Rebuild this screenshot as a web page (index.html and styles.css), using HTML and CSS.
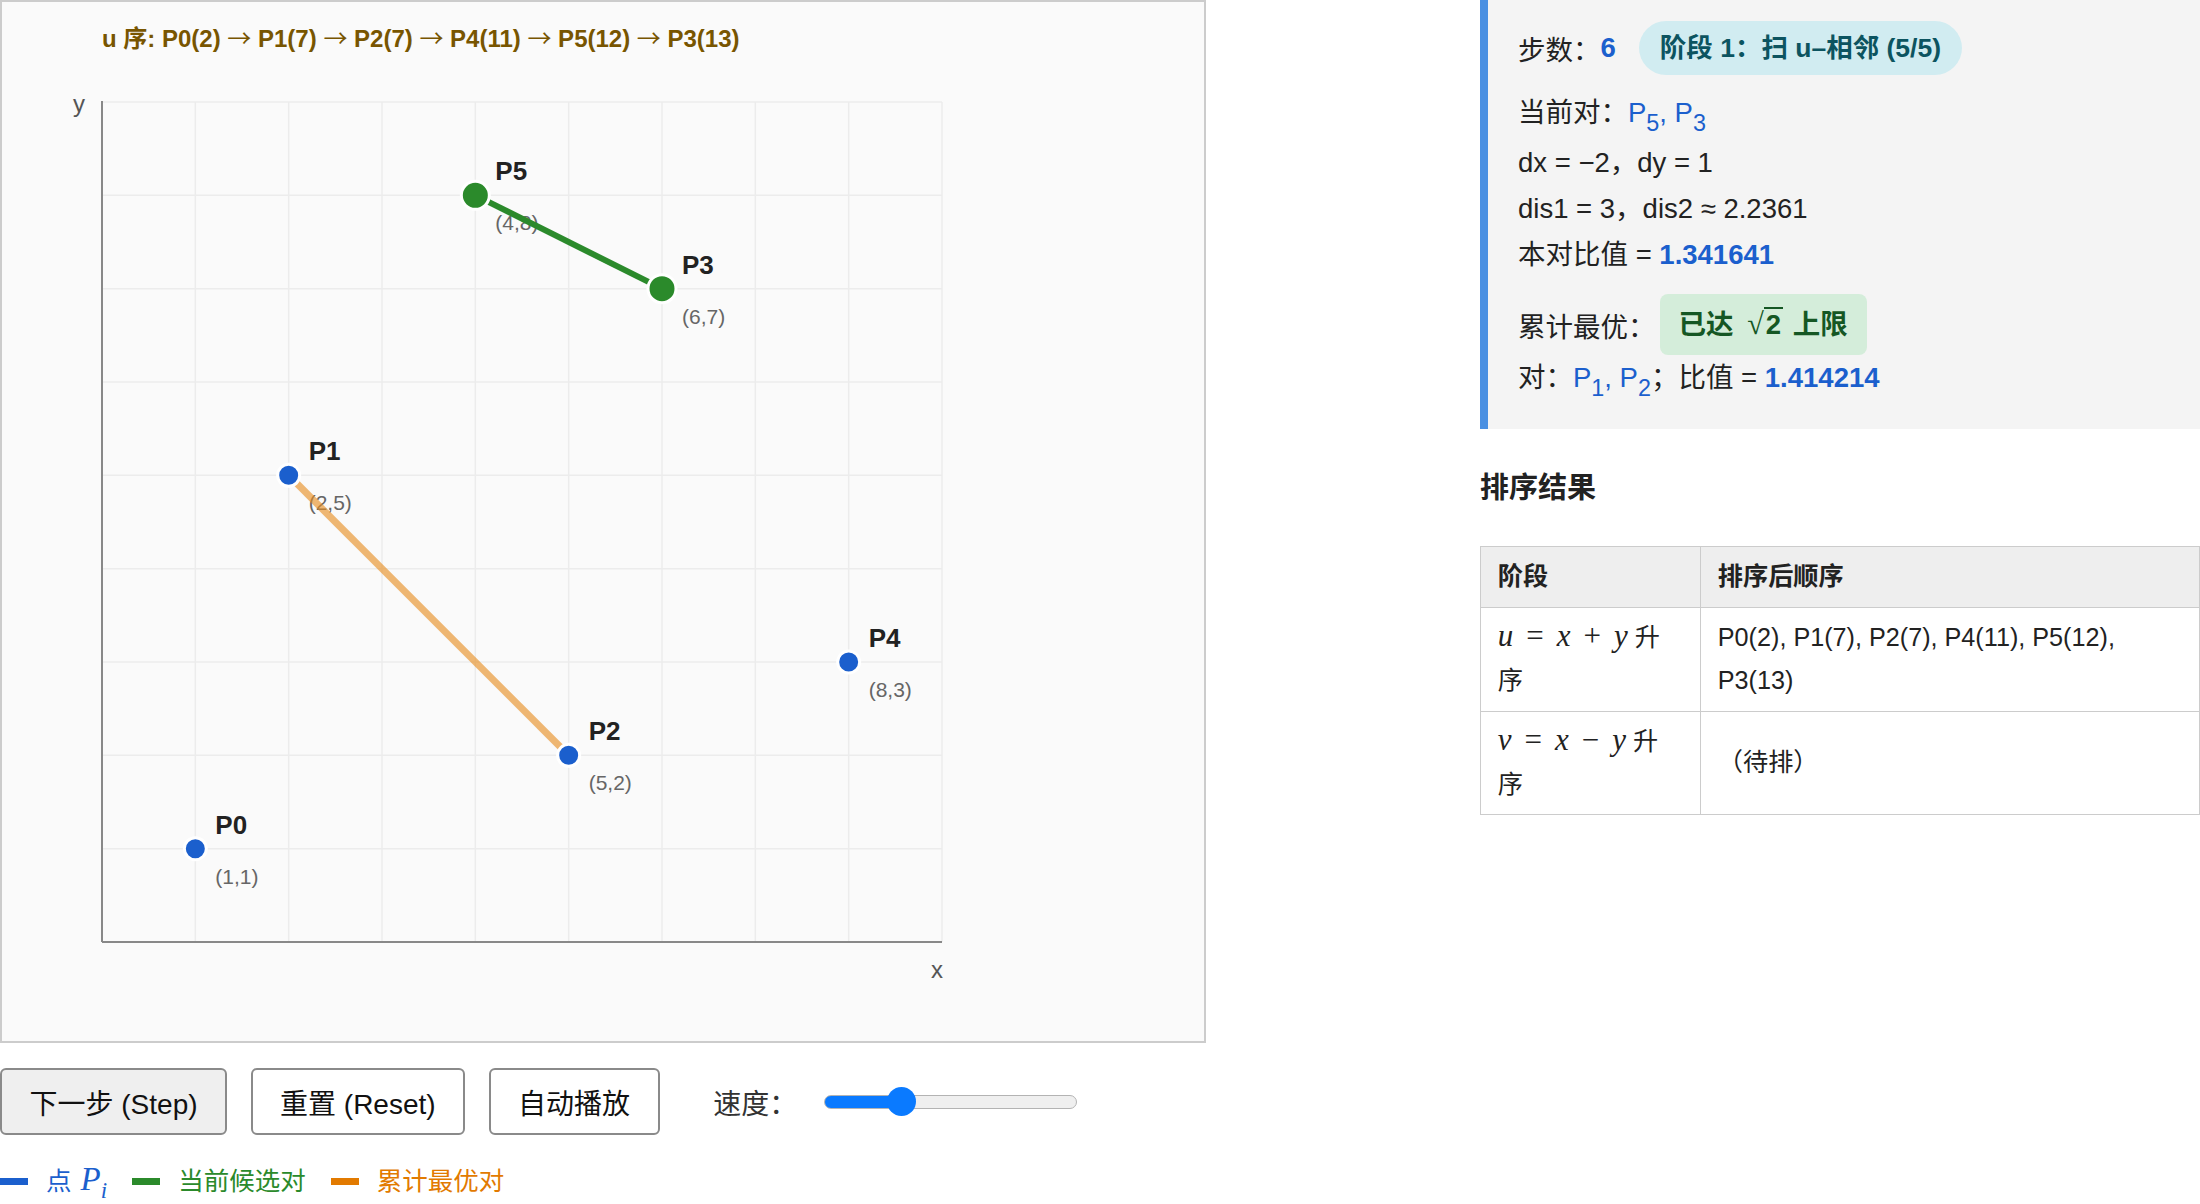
FILE: index.html
```html
<!DOCTYPE html>
<html lang="zh-CN">
<head>
  <meta charset="UTF-8" />
  <meta name="viewport" content="width=device-width, initial-scale=1.0"/>
  <title>√2 比值扫描</title>
  <link rel="stylesheet" href="styles.css">
</head>
<body>
  <div class="page">
    <section class="left">
      <div class="board">
        <svg width="1202" height="1039" viewBox="0 0 1202 1039">
          <text class="title" x="100" y="44.5">u 序: P0(2) <tspan class="arr">→</tspan> P1(7) <tspan class="arr">→</tspan> P2(7) <tspan class="arr">→</tspan> P4(11) <tspan class="arr">→</tspan> P5(12) <tspan class="arr">→</tspan> P3(13)</text>

          <g class="grid">
            <line x1="193.33" y1="100" x2="193.33" y2="940"/>
            <line x1="286.67" y1="100" x2="286.67" y2="940"/>
            <line x1="380" y1="100" x2="380" y2="940"/>
            <line x1="473.33" y1="100" x2="473.33" y2="940"/>
            <line x1="566.67" y1="100" x2="566.67" y2="940"/>
            <line x1="660" y1="100" x2="660" y2="940"/>
            <line x1="753.33" y1="100" x2="753.33" y2="940"/>
            <line x1="846.67" y1="100" x2="846.67" y2="940"/>
            <line x1="940" y1="100" x2="940" y2="940"/>
            <line x1="100" y1="100" x2="940" y2="100"/>
            <line x1="100" y1="193.33" x2="940" y2="193.33"/>
            <line x1="100" y1="286.67" x2="940" y2="286.67"/>
            <line x1="100" y1="380" x2="940" y2="380"/>
            <line x1="100" y1="473.33" x2="940" y2="473.33"/>
            <line x1="100" y1="566.67" x2="940" y2="566.67"/>
            <line x1="100" y1="660" x2="940" y2="660"/>
            <line x1="100" y1="753.33" x2="940" y2="753.33"/>
            <line x1="100" y1="846.67" x2="940" y2="846.67"/>
          </g>

          <g class="axes">
            <line x1="100" y1="99" x2="100" y2="940"/>
            <line x1="100" y1="940" x2="940" y2="940"/>
          </g>
          <text class="axis-label" x="71" y="110">y</text>
          <text class="axis-label" x="929" y="976">x</text>

          <!-- labels -->
          <text class="pt-name" x="213.3" y="831.7">P0</text>
          <text class="pt-coord" x="213.3" y="881.5">(1,1)</text>
          <text class="pt-name" x="306.7" y="458.3">P1</text>
          <text class="pt-coord" x="306.7" y="508">(2,5)</text>
          <text class="pt-name" x="586.7" y="738.3">P2</text>
          <text class="pt-coord" x="586.7" y="788">(5,2)</text>
          <text class="pt-name" x="680" y="271.7">P3</text>
          <text class="pt-coord" x="680" y="321.5">(6,7)</text>
          <text class="pt-name" x="866.7" y="645">P4</text>
          <text class="pt-coord" x="866.7" y="695">(8,3)</text>
          <text class="pt-name" x="493.3" y="178.3">P5</text>
          <text class="pt-coord" x="493.3" y="228">(4,8)</text>

          <!-- pairs -->
          <line class="best-line" x1="286.67" y1="473.33" x2="566.67" y2="753.33"/>
          <line class="cur-line" x1="473.33" y1="193.33" x2="660" y2="286.67"/>

          <!-- points -->
          <circle class="pt" cx="193.33" cy="846.67" r="11"/>
          <circle class="pt" cx="286.67" cy="473.33" r="11"/>
          <circle class="pt" cx="566.67" cy="753.33" r="11"/>
          <circle class="pt" cx="846.67" cy="660" r="11"/>
          <circle class="pt cur" cx="660" cy="286.67" r="14"/>
          <circle class="pt cur" cx="473.33" cy="193.33" r="14"/>
        </svg>
      </div>

      <div class="controls">
        <button class="primary">下一步 (Step)</button>
        <button>重置 (Reset)</button>
        <button>自动播放</button>
        <span class="speed-label">速度：</span>
        <input class="speed-range" type="range" min="0" max="100" value="28">
      </div>

      <div class="legend">
        <div class="legend-item blue"><span class="swatch"></span><span>点 <span class="mvar">P<sub>i</sub></span></span></div>
        <div class="legend-item green"><span class="swatch"></span><span>当前候选对</span></div>
        <div class="legend-item orange"><span class="swatch"></span><span>累计最优对</span></div>
      </div>
    </section>

    <aside class="side">
      <div class="status">
        <div class="status-head">步数：<b class="num">6</b><span class="phase">阶段 1：扫 u–相邻 (5/5)</span></div>
        <div class="line pair">当前对：<span class="pts">P<sub>5</sub>, P<sub>3</sub></span></div>
        <div class="line">dx = −2，dy = 1</div>
        <div class="line">dis1 = 3，dis2 ≈ 2.2361</div>
        <div class="line">本对比值 = <b class="num">1.341641</b></div>
        <div class="best">累计最优：<span class="reach">已达 <span class="sqrt">√<span class="rad">2</span></span> 上限</span></div>
        <div class="line pair">对：<span class="pts">P<sub>1</sub>, P<sub>2</sub></span>；比值 = <b class="num">1.414214</b></div>
      </div>

      <h3>排序结果</h3>
      <table class="order">
        <thead>
          <tr><th class="stage">阶段</th><th>排序后顺序</th></tr>
        </thead>
        <tbody>
          <tr>
            <td><span class="m"><i>u</i><span class="op">=</span><i>x</i><span class="op">+</span><i>y</i></span> 升<br>序</td>
            <td>P0(2), P1(7), P2(7), P4(11), P5(12), P3(13)</td>
          </tr>
          <tr>
            <td><span class="m"><i>v</i><span class="op">=</span><i>x</i><span class="op">−</span><i>y</i></span> 升<br>序</td>
            <td>（待排）</td>
          </tr>
        </tbody>
      </table>
    </aside>
  </div>
</body>
</html>
```

FILE: styles.css
```css
:root {
  --blue: #1b5fcd;
  --green: #2b8a2b;
  --orange: #e27a00;
  --font: "Liberation Sans", "Noto Sans CJK SC", sans-serif;
}

* {
  box-sizing: border-box;
}

body {
  margin: 0;
  font-family: var(--font);
  color: #222;
  background: #fff;
}

.page {
  display: grid;
  grid-template-columns: 1206px 720px;
  column-gap: 274px;
  align-items: start;
}

/* ---------- board ---------- */

.board {
  width: 1206px;
  height: 1043px;
  border: 2px solid #ccc;
  background: #fafafa;
}

.board svg {
  display: block;
}

.title {
  font: bold 24px var(--font);
  fill: #785500;
}

.title .arr {
  font-family: "Noto Sans CJK SC", sans-serif;
  font-weight: normal;
}

.grid line {
  stroke: #ececec;
  stroke-width: 1.5;
}

.axes line {
  stroke: #888;
  stroke-width: 2;
}

.axis-label {
  font: 24px var(--font);
  fill: #555;
}

.pt-name {
  font: bold 26px var(--font);
  fill: #222;
}

.pt-coord {
  font: 21px var(--font);
  fill: #666;
}

.best-line {
  stroke: rgba(230, 140, 30, 0.62);
  stroke-width: 7;
}

.cur-line {
  stroke: var(--green);
  stroke-width: 6;
}

.pt {
  fill: var(--blue);
  stroke: #fff;
  stroke-width: 3;
}

.pt.cur {
  fill: var(--green);
}

/* ---------- controls ---------- */

.controls {
  display: flex;
  align-items: center;
  margin-top: 25px;
}

.controls button {
  height: 67px;
  padding: 0 27.5px;
  margin-right: 23.5px;
  font: 28px var(--font);
  color: #111;
  background: #fff;
  border: 2px solid #8a8a8a;
  border-radius: 6px;
}

.controls button.primary {
  background: #efefef;
}

.speed-label {
  margin-left: 30px;
  font-size: 28px;
  color: #333;
}

.speed-range {
  -webkit-appearance: none;
  appearance: none;
  width: 253px;
  height: 14px;
  margin: 0 0 0 27px;
  border: 1px solid #b3b3b3;
  border-radius: 7px;
  background: linear-gradient(to right, #0a7aff 0, #0a7aff 31%, #efefef 31%);
}

.speed-range::-webkit-slider-thumb {
  -webkit-appearance: none;
  width: 29px;
  height: 29px;
  border: none;
  border-radius: 50%;
  background: #0a7aff;
}

/* ---------- legend ---------- */

.legend {
  display: flex;
  align-items: center;
  margin-top: 28px;
  font-size: 25.5px;
  line-height: 36px;
}

.legend-item {
  display: flex;
  align-items: center;
  gap: 18px;
  margin-right: 25px;
}

.swatch {
  width: 28px;
  height: 7px;
}

.legend-item.blue { color: var(--blue); }
.legend-item.blue .swatch { background: var(--blue); }
.legend-item.green { color: var(--green); }
.legend-item.green .swatch { background: var(--green); }
.legend-item.orange { color: var(--orange); }
.legend-item.orange .swatch { background: var(--orange); }

.mvar {
  font: italic 33px "Liberation Serif", serif;
  line-height: 1;
  margin-left: 2px;
}

.mvar sub {
  font-size: 0.7em;
  line-height: 0;
}

/* ---------- status ---------- */

.status {
  background: #f4f4f4;
  border-left: 8px solid #4a90e2;
  padding: 21px 30px 24px;
  font-size: 27.5px;
}

.status-head {
  display: flex;
  align-items: center;
  height: 54px;
  margin-bottom: 15px;
}

.num {
  color: var(--blue);
  font-weight: bold;
}

.phase {
  margin-left: 23px;
  padding: 0 21px;
  line-height: 54px;
  border-radius: 27px;
  background: #d1ecf1;
  color: #0c5460;
  font-size: 26.5px;
  font-weight: bold;
}

.line {
  line-height: 46px;
}

.line.pair {
  padding-bottom: 4px;
}

.pts {
  color: var(--blue);
}

.pts sub {
  font-size: 0.85em;
  line-height: 0;
  vertical-align: -9px;
}

.best {
  display: flex;
  align-items: center;
  height: 61px;
  margin-top: 16px;
}

.reach {
  margin-left: 4px;
  padding: 0 19px;
  line-height: 61px;
  border-radius: 8px;
  background: #d4edda;
  color: #155724;
  font-weight: bold;
}

.sqrt {
  font-weight: normal;
  font-family: "Liberation Serif", serif;
  font-size: 1.1em;
  margin: 0 2px 0 6px;
}

.rad {
  font-family: var(--font);
  font-size: 0.91em;
  font-weight: bold;
  border-top: 2px solid #155724;
  padding: 0 2px;
}

/* ---------- table ---------- */

.side h3 {
  margin: 39px 0 38px;
  font-size: 29px;
  line-height: 40px;
}

.order {
  width: 100%;
  border-collapse: collapse;
  font-size: 25.2px;
  line-height: 43px;
}

.order th,
.order td {
  border: 1px solid #ccc;
  padding: 8.4px 16.8px;
  text-align: left;
}

.order th {
  background: #eee;
}

.order th.stage {
  width: 220px;
}

.m {
  font-family: "Liberation Serif", serif;
  font-size: 31px;
  line-height: 1;
}

.m .op {
  margin: 0 13px;
}
```
